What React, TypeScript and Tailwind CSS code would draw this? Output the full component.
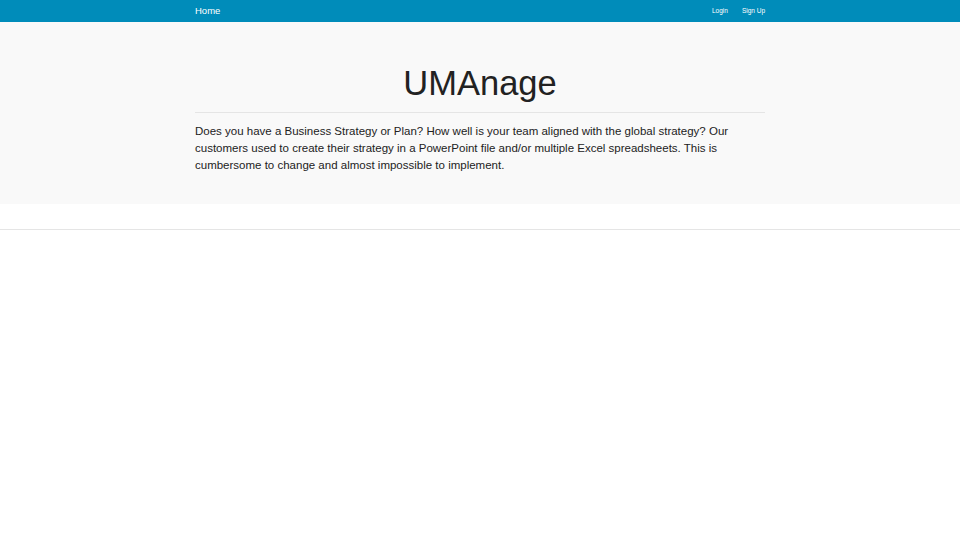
export default function App() {
  return (
    <div className="min-h-[540px] bg-white font-['Liberation_Sans',Arial,sans-serif] text-[#222]">
      <nav className="h-[22px] bg-[#008cba]">
        <div className="mx-auto flex h-full w-[570px] items-center justify-between">
          <span className="text-[9.5px] text-white">Home</span>
          <div className="flex gap-[14px] text-[6.5px] text-white">
            <span>Login</span>
            <span>Sign Up</span>
          </div>
        </div>
      </nav>
      <section className="bg-[#f9f9f9] pb-[30px] pt-[40px]">
        <div className="mx-auto w-[570px]">
          <h1 className="text-center text-[34.5px] leading-[42px] text-[#222]">UMAnage</h1>
          <hr className="mt-[8px] border-[#e5e5e5]" />
          <p className="mt-[10px] text-[11.5px] leading-[17px] text-[#222]">
            Does you have a Business Strategy or Plan? How well is your team aligned with the global strategy? Our
            customers used to create their strategy in a PowerPoint file and/or multiple Excel spreadsheets. This is
            cumbersome to change and almost impossible to implement.
          </p>
        </div>
      </section>
      <hr className="mt-[25px] border-[#e5e5e5]" />
    </div>
  );
}
